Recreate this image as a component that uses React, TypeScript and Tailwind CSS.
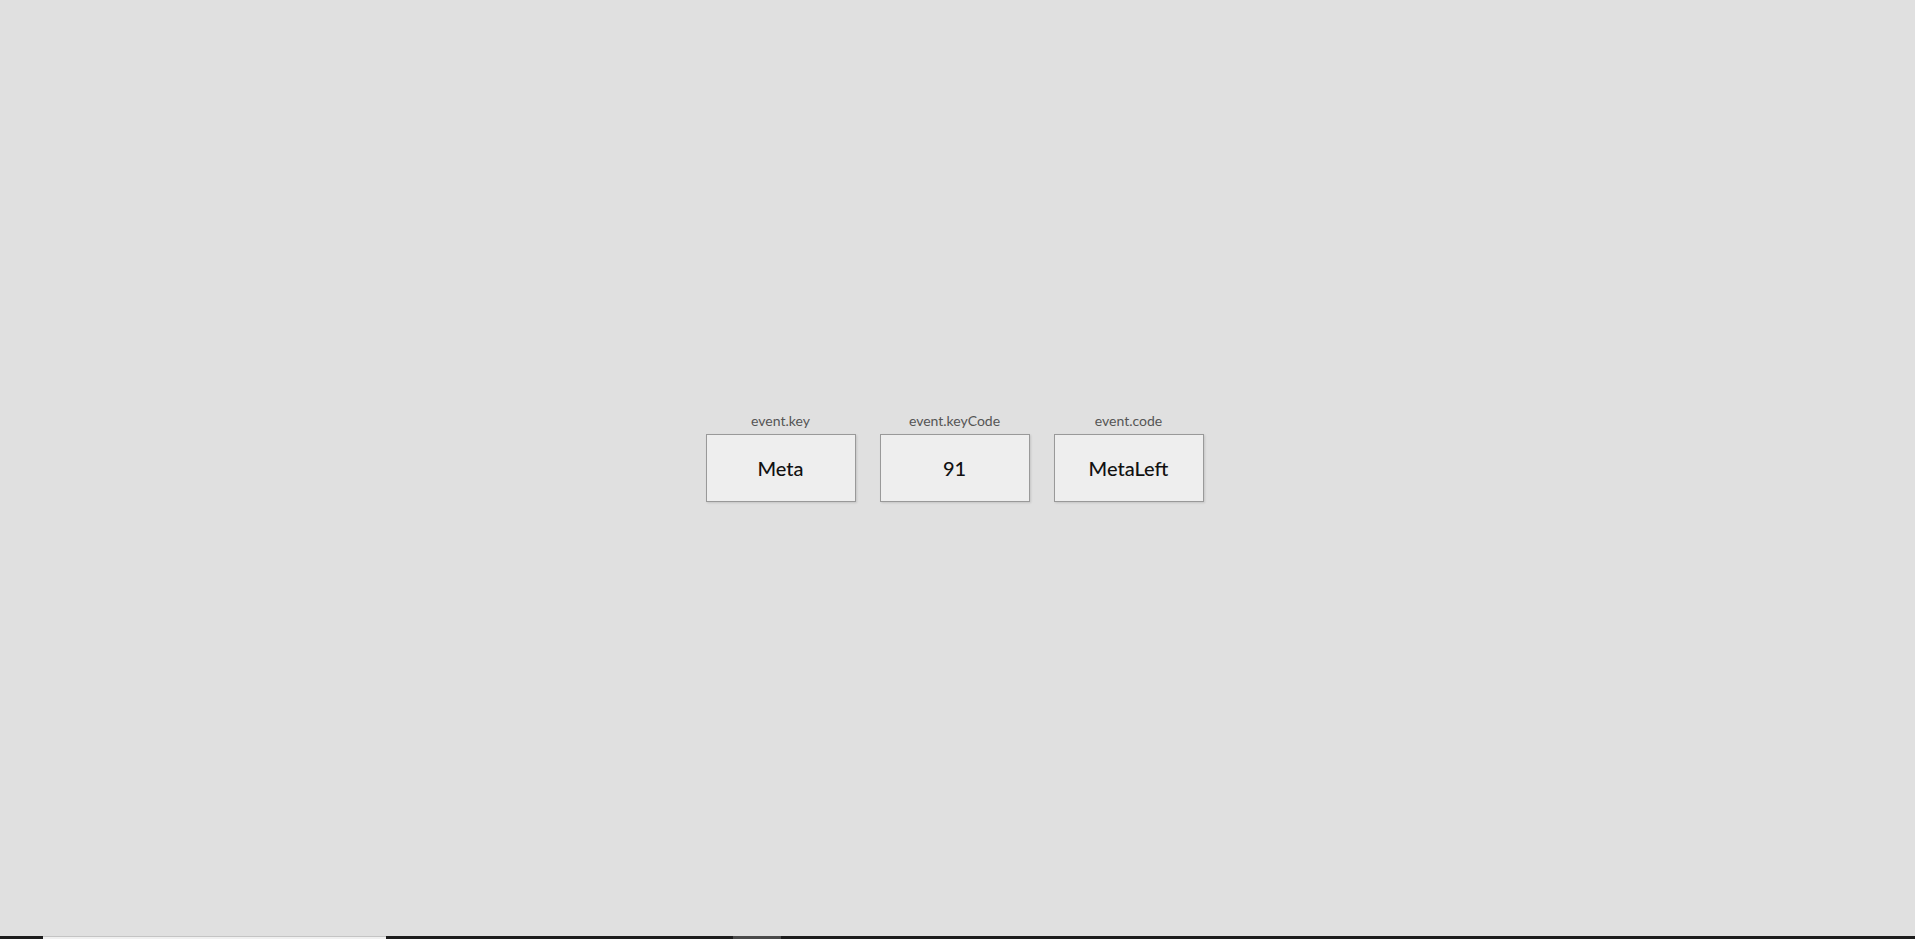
import React from "react";

const fields = [
  { label: "event.key", value: "Meta" },
  { label: "event.keyCode", value: "91" },
  { label: "event.code", value: "MetaLeft" },
];

export default function App() {
  return (
    <div
      className="h-screen flex flex-col bg-[#e0e0e0] overflow-hidden"
      style={{ fontFamily: "Lato, 'Open Sans', sans-serif" }}
    >
      <main className="flex-1 flex items-center justify-center pb-[23px] pr-[6px]">
        <div className="flex gap-[24px]">
          {fields.map((f) => (
            <div key={f.label} className="flex flex-col items-center">
              <span className="text-[14px] leading-[17px] text-[#555] mb-[5px]">{f.label}</span>
              <div className="w-[150px] h-[68px] flex items-center justify-center border border-[#999] bg-[#eee] shadow-[1px_1px_2px_rgba(0,0,0,0.12)]">
                <span className="text-[20px] text-[#111] font-medium">{f.value}</span>
              </div>
            </div>
          ))}
        </div>
      </main>

      {/* bottom strip */}
      <div className="h-[3px] flex bg-[#1c1c1c] shrink-0">
        <div className="ml-[43px] w-[343px] bg-[#f0f0f0] border-t border-[#c4c4c4]" />
        <div className="ml-[347px] w-[48px] bg-[#4a4a4a]" />
      </div>
    </div>
  );
}
